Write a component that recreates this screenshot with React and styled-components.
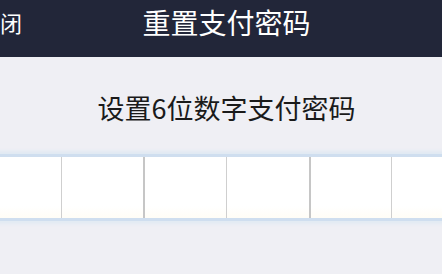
import React from "react";
import styled, { createGlobalStyle } from "styled-components";

const Global = createGlobalStyle`
  html, body { margin: 0; padding: 0; background: #efeff4; overflow: hidden; }
  body { font-family: "Noto Sans CJK SC", "Noto Sans", sans-serif; }
`;

const Screen = styled.div`
  width: 527px;
  margin-left: -37px;
  min-height: 274px;
  background: #efeff4;
  display: flex;
  flex-direction: column;
`;

const Header = styled.header`
  box-sizing: border-box;
  height: 57px;
  background: #222639;
  display: grid;
  grid-template-columns: 1fr auto 1fr;
  align-items: start;
  padding: 8px 15px 0;
  color: #ffffff;
`;

const Close = styled.span`
  font-size: 22px;
  justify-self: start;
  line-height: 1;
  margin-top: 3px;
`;

const Title = styled.h1`
  margin: 0;
  font-size: 28px;
  font-weight: 400;
  line-height: 1;
`;

const Prompt = styled.p`
  margin: 31px 0 0;
  text-align: center;
  font-size: 27px;
  line-height: 40px;
  color: #1a1a1a;
`;

const Boxes = styled.div`
  margin: 26px 16px 0 15px;
  display: grid;
  grid-template-columns: repeat(6, 1fr);
  height: 61px;
  background: #ffffff;
  border-top: 3px solid #cfdeef;
  border-bottom: 3px solid #cfdeef;
  box-shadow: 0 -3px 3px #e0e9f3, 0 3px 3px #e2eaf3;
`;

const Box = styled.div`
  background: linear-gradient(#ffffff 80%, #fffdf6);
  border-left: ${(p) => (p.$first ? "none" : p.$heavy ? "2px solid #c6c6c6" : "1px solid #cfcfcf")};
`;

export default function App() {
  return (
    <>
      <Global />
      <Screen>
        <Header>
          <Close>关闭</Close>
          <Title>重置支付密码</Title>
          <span />
        </Header>
        <Prompt>设置6位数字支付密码</Prompt>
        <Boxes>
          {[0, 1, 2, 3, 4, 5].map((i) => (
            <Box key={i} $first={i === 0} $heavy={i === 2 || i === 4} />
          ))}
        </Boxes>
      </Screen>
    </>
  );
}
